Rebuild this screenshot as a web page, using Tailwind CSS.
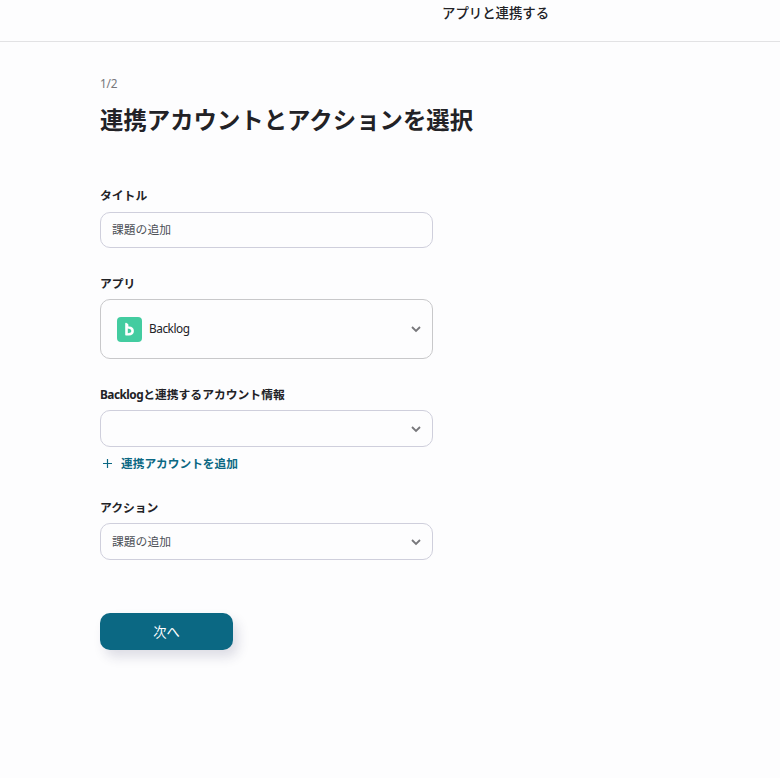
<!DOCTYPE html>
<html lang="ja">
<head>
<meta charset="utf-8">
<title>アプリと連携する</title>
<script src="https://cdn.jsdelivr.net/npm/@tailwindcss/browser@4"></script>
</head>
<body class="h-[778px] overflow-hidden bg-[#fdfdfe] font-['Noto_Sans','Noto_Sans_CJK_JP',sans-serif] text-[#222226]">
<header class="flex h-[42px] border-b border-[#e2e2e4] pl-[442px] pt-[3px]">
  <h2 class="whitespace-nowrap text-[13.4px] leading-5 font-medium">アプリと連携する</h2>
</header>
<main class="flex flex-col items-start pl-[100px] pt-[33px] text-[11.8px]">
  <p class="h-4 leading-4 tracking-[-0.2px] text-[#77777c]">1/2</p>
  <h1 class="mt-[13px] h-8 whitespace-nowrap text-[23.4px] leading-8 font-bold">連携アカウントとアクションを選択</h1>
  <form class="mt-[49px] flex w-[333px] flex-col">
    <label class="h-5 leading-5 font-bold">タイトル</label>
    <div class="mt-[7px] flex h-9 items-center rounded-[10px] border border-[#cfcfdc] px-[11px] text-[#4d5057]">課題の追加</div>
    <label class="mt-[25px] h-5 leading-5 font-bold">アプリ</label>
    <div class="mt-[6px] flex h-[60px] items-center rounded-[10px] border border-[#c8c8ca] pl-4 pr-[11px]">
      <svg class="size-[25px]" viewBox="0 0 25 25"><rect width="25" height="25" rx="4" fill="#43cca0"/><path fill="#fff" fill-rule="evenodd" d="M8.2 6.5c0-.8.7-1 1.3-.6l1.2.8c.5.3.7.7.7 1.3v1.6h.8c2.8 0 4.7 1.7 4.7 4.3 0 2.8-2 4.6-4.9 4.6H8.9c-.5 0-.7-.3-.7-.7zM10.8 11.6v4.6l1.1-.1c1.5-.2 2.4-.9 2.4-2.1s-.9-2-2.4-2.2z"/></svg>
      <span class="ml-[7px] flex-1 tracking-[-0.45px]">Backlog</span>
      <svg class="size-[10px]" viewBox="0 0 10 10" fill="none" stroke="#77777b" stroke-width="1.8"><path d="M1 3l4 4 4-4"/></svg>
    </div>
    <label class="mt-[25px] h-5 whitespace-nowrap leading-5 font-bold"><span class="tracking-[-0.5px]">Backlog</span>と連携するアカウント情報</label>
    <div class="mt-[6px] flex h-[37px] items-center justify-end rounded-[10px] border border-[#cfcfdc] pr-[11px]">
      <svg class="size-[10px]" viewBox="0 0 10 10" fill="none" stroke="#77777b" stroke-width="1.8"><path d="M1 3l4 4 4-4"/></svg>
    </div>
    <a class="mt-[6px] flex h-5 items-center pl-[3px] text-[11.7px] font-bold text-[#0b6883]">
      <svg class="size-[9px]" viewBox="0 0 9 9" stroke="currentColor" stroke-width="1.2"><path d="M4.5 0v9M0 4.5h9"/></svg>
      <span class="ml-[9px] leading-5">連携アカウントを追加</span>
    </a>
    <label class="mt-6 h-5 leading-5 font-bold">アクション</label>
    <div class="mt-[6px] flex h-[37px] items-center justify-between rounded-[10px] border border-[#cfcfdc] px-[11px] text-[#4d5057]">
      <span>課題の追加</span>
      <svg class="size-[10px]" viewBox="0 0 10 10" fill="none" stroke="#77777b" stroke-width="1.8"><path d="M1 3l4 4 4-4"/></svg>
    </div>
    <button type="button" class="mt-[53px] h-[37px] w-[133px] rounded-[10px] bg-[#0b6883] pt-[2px] text-[13.3px] text-white shadow-[5px_7px_12px_rgba(40,40,90,0.15)]">次へ</button>
  </form>
</main>
</body>
</html>
